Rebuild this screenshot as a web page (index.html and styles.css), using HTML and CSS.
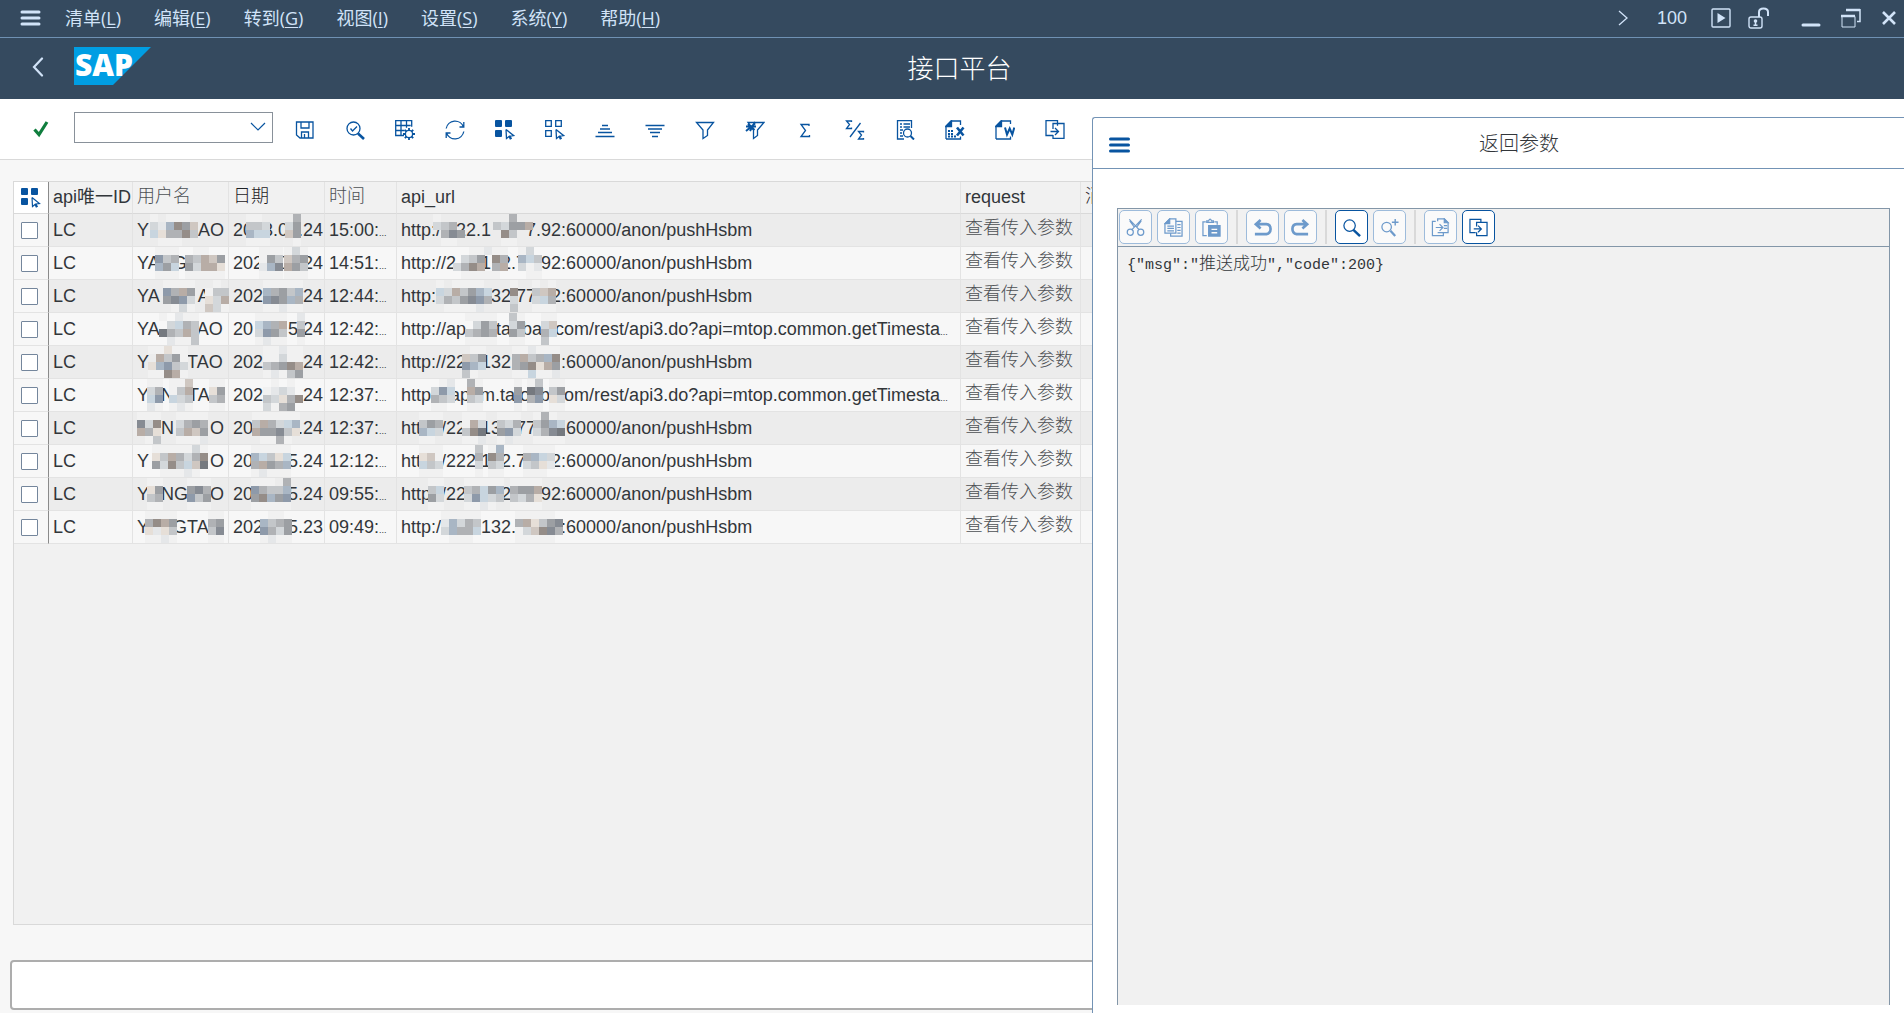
FILE: index.html
```html
<!DOCTYPE html>
<html lang="zh-CN">
<head>
<meta charset="utf-8">
<title>接口平台</title>
<link rel="stylesheet" href="styles.css">
</head>
<body>
<nav class="menubar">
  <button class="bar-button" aria-label="菜单"><svg width="21" height="18" viewBox="0 0 21 18"><path d="M2 3h17M2 9h17M2 15h17" stroke-width="3" stroke-linecap="round"/></svg></button>
  <div class="menus">
    <a href="#">清单(<u>L</u>)</a>
    <a href="#">编辑(<u>E</u>)</a>
    <a href="#">转到(<u>G</u>)</a>
    <a href="#">视图(<u>I</u>)</a>
    <a href="#">设置(<u>S</u>)</a>
    <a href="#">系统(<u>Y</u>)</a>
    <a href="#">帮助(<u>H</u>)</a>
  </div>
  <div class="system">
    <button class="bar-button" aria-label="更多"><svg width="10" height="16" viewBox="0 0 10 16"><path d="M1 1l8 7-8 7" stroke-width="1.3"/></svg></button>
    <span class="zoom">100</span>
    <button class="bar-button" aria-label="运行"><svg width="20" height="20" viewBox="0 0 20 20"><rect x="1" y="1" width="18" height="18" rx="1" stroke-width="1.4"/><path d="M6.500 5l8 5-8 5z" fill="#d1e3f8" stroke="none"/></svg></button>
    <button class="bar-button" aria-label="解锁"><svg width="22" height="22" viewBox="0 0 22 22"><rect x="1" y="10" width="13" height="11" rx="2" stroke-width="1.400"/><path d="M11 10V5q0-3.500 4.500-3.500T20 5v4" stroke-width="2"/><circle cx="7.500" cy="14" r="1.800" fill="#d1e3f8" stroke="none"/><path d="M7.500 14v4M5.500 18.200h4" stroke-width="1.500"/></svg></button>
    <span class="window-buttons">
      <button class="bar-button" aria-label="最小化"><svg width="20" height="20" viewBox="0 0 20 20"><path d="M2 17h16" stroke-width="3" stroke-linecap="round"/></svg></button>
      <button class="bar-button" aria-label="还原"><svg width="20" height="20" viewBox="0 0 20 20"><path d="M1 8.500h13V19H1z" stroke-width="1"/><path d="M0 8h14" stroke-width="2.500"/><path d="M5 2h14M19 1v12.500h-3" stroke-width="1.500"/><path d="M5 2h14" stroke-width="2.500"/></svg></button>
      <button class="bar-button" aria-label="关闭"><svg width="16" height="16" viewBox="0 0 16 16"><path d="M2 2l12 12M14 2L2 14" stroke-width="2.600"/></svg></button>
    </span>
  </div>
</nav>
<header class="header">
  <button class="back" aria-label="返回"><svg width="12" height="20" viewBox="0 0 12 20"><path d="M10 1.500L2 10l8 8.500" stroke="#d1e3f8" stroke-width="2.200" fill="none" stroke-linecap="round"/></svg></button>
  <svg class="logo" width="77" height="38" viewBox="0 0 77 38"><path d="M0 0h77L39 38H0z" fill="#009ee3"/><text x="1" y="29" class="logo-text">SAP</text></svg>
  <h1>接口平台</h1>
</header>
<main class="workspace">
  <section class="list-pane">
    <div class="toolbar">
      <button class="tick" aria-label="确认"><svg width="16" height="18" viewBox="0 0 16 18"><path d="M1.500 9.500l4.500 5L14 2" stroke="#107e3e" stroke-width="3.200" fill="none"/></svg></button>
      <select class="command" aria-label="命令"><option></option></select>
      <button class="tool" aria-label="保存"><svg viewBox="0 0 20 20"><path d="M1.500 2h16.500v16H5L1.500 15zM6 2v6h8V2M6.500 18v-6h7v6M9.500 14v4"/></svg></button>
      <button class="tool" aria-label="检查"><svg viewBox="0 0 20 20"><circle cx="8.500" cy="8.500" r="6.500"/><path d="M5.500 8.500l2 2.500 4.500-4.500"/><path d="M13 13.500l6 5.500" stroke-width="2.600"/></svg></button>
      <button class="tool" aria-label="布局"><svg viewBox="0 0 20 20"><path d="M9 15.500H.700V.700h16v6M.700 5.500h15M.700 10.500h9M6 .700v15M11.500.700v7"/><circle cx="14" cy="14" r="3.600"/><path d="M14 8v2.500M14 17.500V20M8 14h2.500M17.500 14H20M9.800 9.800l1.700 1.700M16.500 16.500l1.700 1.700M9.800 18.200l1.700-1.700M16.500 11.500l1.700-1.700" stroke-width="1.800"/></svg></button>
      <button class="tool" aria-label="刷新"><svg viewBox="0 0 20 20"><path d="M1.200 8.500A9 9 0 0 1 18.500 7M18.800 11.500A9 9 0 0 1 1.500 13M14.500 7h4.300V2M5.500 13H1.200v5"/></svg></button>
      <button class="tool" aria-label="全选"><svg viewBox="0 0 20 20"><g fill="#0854a0" stroke="none"><rect x="0" y="0" width="7" height="7" rx="1"/><rect x="10" y="0" width="7" height="7" rx="1"/><rect x="0" y="10" width="7" height="7" rx="1"/></g><path d="M11 9.500l7.500 6-3.500.500 1.500 3M11 9.500l.5 9 2.500-2 1.500 3"/></svg></button>
      <button class="tool" aria-label="取消全选"><svg viewBox="0 0 20 20"><path d="M.700.700h5.600v5.600H.700zM10.700.700h5.600v5.600h-5.600zM.700 10.700h5.600v5.600H.700zM11 9.500l7.500 6-3.500.500 1.500 3M11 9.500l.5 9 2.500-2 1.500 3"/></svg></button>
      <button class="tool" aria-label="升序"><svg viewBox="0 0 20 20"><path d="M7 5.500h6M5 9h10M3 12.500h14M.5 16.500h19"/></svg></button>
      <button class="tool" aria-label="降序"><svg viewBox="0 0 20 20"><path d="M.5 5.500h19M3 9h14M5 12.500h10M7 16.500h6"/></svg></button>
      <button class="tool" aria-label="筛选"><svg viewBox="0 0 20 20"><path d="M1.500 2.500h17L12.500 10v5.500L8 18.500V10z"/></svg></button>
      <button class="tool" aria-label="删除筛选"><svg viewBox="0 0 20 20"><path d="M3 2.500h16L12.500 10v5.500L8.500 18.500V10z"/><path d="M1 11l9-7.500M3 4l6.500 6M1 6.500h10M10 2l-5 9" stroke-width="2"/></svg></button>
      <button class="tool" aria-label="合计"><svg viewBox="0 0 20 20"><path d="M14 6V4.500H6l4.500 6L6 16.500h8.500V15"/></svg></button>
      <button class="tool" aria-label="小计"><svg viewBox="0 0 20 20"><path d="M6.500 2V1h-5l3 3.500-3 4h5V7.500M18.500 12.500V11.500h-5l3 3.500-3 4h5V18M15.500 3L5 17"/></svg></button>
      <button class="tool" aria-label="打印预览"><svg viewBox="0 0 20 20"><path d="M9 19H2.500V.700h14V8M5 4h2M8.500 4H15M5 7h2M8.500 7H15M5 10h3M5 13h2M5 16h3"/><circle cx="12.500" cy="13" r="4"/><path d="M15.500 16l3.500 3.500" stroke-width="2"/></svg></button>
      <button class="tool" aria-label="导出到电子表格"><svg viewBox="0 0 20 20"><path d="M1 19V6l5-5h9.500v4M15.500 16.500V19H1"/><path d="M1 6.500L6.500 1v5.500z" fill="#0854a0"/><path d="M3 11h6M3 14h6M3 16.500h9" stroke-dasharray="2 1" stroke-width="1.800"/><path d="M12 7.500l6.500 8M18.500 7.500L12 15.500" stroke-width="2.600"/></svg></button>
      <button class="tool" aria-label="导出到文字处理"><svg viewBox="0 0 20 20"><path d="M1 19V6l5-5h9.500v3M15.500 16.500V19H1"/><path d="M1 6.500L6.500 1v5.500z" fill="#0854a0"/><path d="M10 7.500l2 7 2.700-6 2.600 6 2-7" stroke-width="2"/></svg></button>
      <button class="tool" aria-label="本地文件"><svg viewBox="0 0 20 20"><path d="M8 15.500H1V.700h11.500v5M8 9V3.500h11v14.800H8V15M5.500 11.500h7.500M10 8l3.500 3.500L10 15"/></svg></button>
    </div>
    <div class="list-body">
      <div class="grid">
        <table>
          <colgroup><col class="c-check"><col class="c-id"><col class="c-name"><col class="c-name"><col class="c-time"><col class="c-url"><col class="c-request"><col class="c-rest"></colgroup>
          <thead>
            <tr>
              <th class="check"><button class="select-all" aria-label="选择全部"><svg width="20" height="20" viewBox="0 0 20 20"><g fill="#0854a0"><rect x="0" y="0" width="7" height="7" rx="1"/><rect x="10" y="0" width="7" height="7" rx="1"/><rect x="0" y="10" width="7" height="7" rx="1"/></g><path d="M11 9.500l7.500 6-3.500.500 1.500 3M11 9.500l.5 9 2.500-2 1.500 3" fill="none" stroke="#0854a0" stroke-width="1.200"/></svg></button></th>
              <th>api唯一ID</th><th class="thin">用户名</th><th class="thin dark">日期</th><th class="thin">时间</th><th>api_url</th><th>request</th><th class="thin dark">消息</th>
            </tr>
          </thead>
          <tbody id="rows"></tbody>
        </table>
      </div>
      <input class="status" type="text" readonly aria-label="状态">
    </div>
  </section>
  <section class="dialog">
    <header class="dialog-header">
      <button class="dialog-menu" aria-label="菜单"><svg width="21" height="18" viewBox="0 0 21 18"><path d="M1.500 3h18M1.500 9h18M1.500 15h18" stroke="#0854a0" stroke-width="3" stroke-linecap="round"/></svg></button>
      <h2>返回参数</h2>
    </header>
    <div class="dialog-body">
      <div class="editor">
        <div class="editor-tools">
          <button disabled aria-label="剪切"><svg viewBox="0 0 20 20"><circle cx="4.500" cy="15" r="3.200"/><circle cx="15.500" cy="15" r="3.200"/><path d="M6 12.500L16.500 1.500M14 12.500L3.500 1.500M4 3l5 7M16 3l-5 7"/></svg></button>
          <button disabled aria-label="复制"><svg viewBox="0 0 20 20"><path d="M6 1h6.500v15H1V6z"/><path d="M1 6h5V1z" fill="#6d9acb"/><path d="M12.500 3.500H19v15.500H7V16M3.500 8.500h7M3.500 11h7M3.500 13.500h7M14 7h3.500M14 10h3.500M14 13h3.500M14 16h3.500"/></svg></button>
          <button disabled aria-label="粘贴"><svg viewBox="0 0 20 20"><path d="M5 18.500H1V4h3M13 4h3v3M5 4.500h7V3h-2q-1.500-3.500-3 0H5z"/><path d="M7 8h12v11H7z" fill="#6d9acb"/><path d="M10 12h6M10 15.500h6" stroke="#fafafa" stroke-width="1.500"/></svg></button>
          <i></i>
          <button disabled aria-label="撤销"><svg class="bold" viewBox="0 0 20 20"><path d="M8 2L3 6.500 8 11M3 6.500h11q4.500.5 4.500 5t-4.500 5.500H2"/></svg></button>
          <button disabled aria-label="重做"><svg class="bold" viewBox="0 0 20 20"><path d="M12 2l5 4.500L12 11M17 6.500H6q-4.500.5-4.500 5T6 17h12"/></svg></button>
          <i></i>
          <button class="active" aria-label="查找"><svg viewBox="0 0 20 20"><circle cx="8" cy="8" r="6"/><path d="M12 12.500l7 6.500" stroke-width="2.600"/></svg></button>
          <button disabled aria-label="查找下一个"><svg viewBox="0 0 20 20"><circle cx="7" cy="9.500" r="5"/><path d="M11 13.500l5 5.500" stroke-width="2.400"/><path d="M16 1v7M12.500 4.500h7" stroke-width="1.500"/></svg></button>
          <i></i>
          <button disabled aria-label="导入"><svg viewBox="0 0 20 20"><path d="M7 3.500V1h7l4 4v10.500h-5M1.500 3.500H5M1.500 3v15.500H13V15.500M5 10h7M9 6.500l3.500 3.500L9 13.500M13.500 8H17M13.500 11H17M7 15.500h6"/><path d="M14 1v4h4z" fill="#6d9acb"/></svg></button>
          <button class="active" aria-label="导出"><svg viewBox="0 0 20 20"><path d="M7 15.500H1V1.500h11.500v3M8 9V4.500h11v14H8V15M5 11.500h7.500M9.500 8l3.500 3.500L9.500 15"/></svg></button>
        </div>
        <pre>{"msg":"<span>推送成功</span>","code":200}</pre>
      </div>
    </div>
  </section>
</main>
<script src="rows.js"></script>
</body>
</html>
```
FILE: styles.css
```css
* { box-sizing: border-box; }
html, body { height: 100%; }
body {
  margin: 0;
  display: flex;
  flex-direction: column;
  overflow: hidden;
  background: #fff;
  color: #32363a;
  font: 18px/32px "Liberation Sans", "Noto Sans CJK SC", sans-serif;
}
button {
  border: 0;
  padding: 0;
  background: none;
  display: flex;
  align-items: center;
  justify-content: center;
  flex: none;
}
h1, h2 { margin: 0; font-weight: 300; }
svg { display: block; flex: none; }

.menubar {
  display: flex;
  align-items: center;
  height: 38px;
  flex: none;
  padding: 0 7px 1px 20px;
  background: #354a5f;
  border-bottom: 1px solid #6f91b3;
}
.bar-button svg { fill: none; stroke: #d1e3f8; }
.menus { display: flex; gap: 33px; margin-left: 24px; }
.menus a {
  color: #d1e3f8;
  text-decoration: none;
  font-family: "Open Sans", "Noto Sans CJK SC", sans-serif;
}
.menus u { text-underline-offset: 2px; }
.system { display: flex; align-items: center; margin-left: auto; color: #d1e3f8; }
.zoom { margin: 0 24px 0 29px; }
.system > .bar-button + .bar-button { margin-left: 17px; }
.window-buttons { display: flex; align-items: center; gap: 20px; margin-left: 31px; }

.header {
  display: flex;
  align-items: center;
  height: 61px;
  flex: none;
  padding: 0 136px 4px 32px;
  background: #354a5f;
}
.logo { margin: 0 0 2px 30px; }
.logo-text { font: 800 30px "Open Sans", sans-serif; fill: #fff; }
.header h1 {
  flex: 1;
  text-align: center;
  color: #fff;
  font-size: 26px;
  font-family: "Noto Sans CJK SC", sans-serif;
}

.workspace { flex: 1; display: flex; min-height: 0; }
.list-pane { flex: 1; min-width: 0; display: flex; flex-direction: column; overflow: hidden; }
.toolbar {
  display: flex;
  align-items: center;
  height: 61px;
  flex: none;
  padding-left: 33px;
  border-bottom: 1px solid #d9d9d9;
}
.command {
  appearance: none;
  width: 199px;
  height: 31px;
  margin: 0 7px 4px 25px;
  border: 1px solid #89919a;
  border-radius: 0;
  background: #fff url("data:image/svg+xml,%3Csvg xmlns='http://www.w3.org/2000/svg' width='16' height='10'%3E%3Cpath d='M1 1l7 7 7-7' fill='none' stroke='%230854a0' stroke-width='1.2'/%3E%3C/svg%3E") no-repeat right 6px center;
}
.tool { width: 50px; height: 40px; padding-top: 1px; }
.tool svg { width: 20px; height: 20px; fill: none; stroke: #0854a0; stroke-width: 1.3; }

.list-body {
  flex: 1;
  min-height: 0;
  display: flex;
  flex-direction: column;
  padding: 21px 0 3px 10px;
  background: #f7f7f7;
}
.grid {
  flex: 1;
  min-height: 0;
  overflow: hidden;
  margin-left: 3px;
  background: #f1f1f1;
  border: 1px solid #d9d9d9;
  border-right: 0;
}
.status {
  height: 50px;
  flex: none;
  margin: 35px -8px 0 0;
  border: 2px solid #adadad;
  border-radius: 4px;
  background: #fff;
}

table { table-layout: fixed; width: 1227px; border-spacing: 0; }
.c-check { width: 35px; }
.c-id { width: 84px; }
.c-name { width: 96px; }
.c-time { width: 72px; }
.c-url { width: 564px; }
.c-request { width: 120px; }
.c-rest { width: 160px; }
th, td {
  padding: 0 0 0 4px;
  border-right: 1px solid #e3e3e3;
  border-bottom: 1px solid #e3e3e3;
  text-align: left;
  vertical-align: top;
  font-weight: 400;
  white-space: nowrap;
}
th { height: 32px; line-height: 31px; border-bottom-color: #d9d9d9; }
td { height: 33px; }
tbody tr:nth-child(odd) { background: #ececec; }
tbody tr:nth-child(even) { background: #f7f7f7; }
.check { padding: 0 0 0 7px; border-right-color: #8a8a8a; background: #f7f7f7; vertical-align: middle; }
th.check { background: #fff; }
.check input {
  appearance: none;
  display: block;
  width: 17px;
  height: 17px;
  margin: 0;
  border: 1px solid #74869c;
  border-radius: 1px;
  background: #fff;
}
.thin { font-weight: 300; color: #4c5054; line-height: 28px; }
.dark { color: #1d2125; }
.more { font-size: 9px; line-height: 1; }
.mosaic { display: inline-block; vertical-align: top; position: relative; }

.dialog {
  flex: 0 1 812px;
  margin-top: 18px;
  display: flex;
  flex-direction: column;
  border: 1px solid #7393b5;
  border-width: 1px 0 0 1px;
  border-radius: 3px 0 0 0;
}
.dialog-header {
  display: flex;
  align-items: center;
  height: 51px;
  flex: none;
  padding-left: 16px;
  border-bottom: 1px solid #7393b5;
}
.dialog-menu { margin-top: 4px; }
.dialog-header h2 { flex: 1; padding-left: 4px; text-align: center; font-size: 20px; font-family: "Noto Sans CJK SC", sans-serif; }
.dialog-body { flex: 1; min-height: 0; display: flex; padding: 39px 14px 8px 24px; }
.editor {
  flex: 1;
  background: #f1f1f1;
  border: 1px solid #8396a8;
  border-bottom: 0;
}
.editor-tools {
  display: flex;
  align-items: center;
  gap: 5px;
  height: 38px;
  padding: 0 1px 1px;
  border-bottom: 1px solid #8396a8;
}
.editor-tools button {
  width: 33px;
  height: 34px;
  border: 1px solid #9dbbdb;
  border-radius: 5px;
  background: #fafafa;
}
.editor-tools .active { border: 1px solid #0854a0; background: #fff; }
.editor-tools svg { width: 19px; height: 19px; fill: none; stroke: #6d9acb; stroke-width: 1.3; }
.editor-tools .active svg { stroke: #0854a0; }
.editor-tools .bold { stroke-width: 2.8; }
.editor-tools i { width: 2px; height: 34px; margin: 0 3px 0 3px; background: #d9d9d9; }
.editor pre { margin: 0; padding: 2px 9px; font: 300 15px/32px "Liberation Mono", "Noto Sans CJK SC", monospace; }
.editor pre span { font-size: 17px; }
```
FILE: rows.js
```javascript
// Palette of the blocks that cover private values; a dot leaves the cell visible.
const palette = {
  w: '#f1f1f1', a: '#e5e7e9', b: '#d3d7da', c: '#c3c6c9', d: '#b0b2b5', e: '#9c9fa3', f: '#868b93', g: '#75797f',
  h: '#e6dfd8', i: '#cfc7c1', j: '#b8ada6', k: '#958d88', l: '#c8d5df', m: '#a9b6c4', n: '#8e9aaa'
};

// "[width|row/row/row/row]" stands for a covered stretch of text.
const push = ':60000/anon/pushHsbm';
const rest = 'om/rest/api3.do?api=mtop.common.getTimesta…';
const rows = [
  ['Y[49|w.www./bamkei/lhddkc/.www..]AO', '20[10|ww./ccb/mll/www]3.0[10|.d/be/ie/.w].24', '15:00:…', 'http:/[15|w.../bcd./.dfe/.ww.]22.1[35|...d./.cbeej/..kc../..ww.]7.92' + push],
  ['YA[13|www/ncd/mel/www]G[36|.ww../dcjie/ebjjh/wwwww]', '202[15|www/wec/amf/www]0[15|wbw/ide/jec/www]24', '14:51:…', 'http://2[25|..ww/.bce/bdkj/.www]1[10|aww/.kd/.dj/ww.]2.7[15|wb../mlc/bwa/.ww]92' + push],
  ['YA[38|wwww/ndje/efnb/.wbw]A[13|.w./wcc/hbj/ibw]', '202[40|wwwww/mdecm/nfemd/wwaww]24', '12:44:…', 'http:[55|w.wwww./lbjceml/bdcefnd/.wwwwa.]32[5|w/k/b/c]77[15|w.w/cij/bld/www]2' + push],
  ['YA[37|w.aww/.bldc/gdcjc/.awwc]AO', '20[35|wwww/lmdj/bnec/waww]5[5|a/c/e/w]24', '12:42:…', 'http://ap[30|wwww/.bec/cded/wwww]ta[11|cw/be/ec/ww]ba[13|ww/bi/dl/c.]c' + rest],
  ['Y[38|wwhww/.jcew/hmncb/wwkjw]TAO', '202[40|wwaww/wwbww/cdekj/wawce]24', '12:42:…', 'http://22[15|.ww/ice/nml/cw.]132[50|wwawww/djcdmk/dekhje/wwlwwa]' + push],
  ['Y[12|ww/bd/ln/aw]N[14|wwi/wcj/lbc/waw]TA[14|ww/he/cd/ww]', '202[40|.w.w./waba./cbhdk/bwde.]24', '12:37:…', 'http:[14|.wa/bnl/dcb/ww.]ap[10|dw/je/cb/ww]m.ta[5|w/e/n/w]o[10|wc/gf/dn/ww]b[14|ww/ce/hb/ww]' + rest],
  ['[24|www/fbk/jdh/.wc]N[36|wwww/bded/cjie/wwwa]O', '20[45|wwwwww/cjdblm/jeefch/.wwdw.].24', '12:37:…', 'htt[20|www/ced/mlb/ww.]/22[15|www/wjb/ckg/wwa]13[15|www/cbd/enb/wa.]77[25|wdw/ceml/bdfg/wwww]' + push],
  ['Y[61|wwwwwbw/hcjdbdk/ebkclig/.wwwaw.]O', '20[20|www/mlc/dje/waw].[10|ww/hl/dm/ww]5.24', '12:12:…', 'htt[20|www/hiw/lcb/www]/222[5|c/d/b/w]1[10|wm/kd/cb/ww]2.7[25|wwww/dmlb/bcha/www.]2' + push],
  ['Y[12|ww/he/cd/ww]NG[22|www/efd/nce/www]O', '20[20|www/ndc/ekm/www].[10|.d/cm/en/ww]5.24', '09:55:…', 'http[10|ww/cl/eb/ww]/22[35|wwwww/cdlem/bnlbc/wwaw.]2[30|wwww/deej/cbdh/wwww]92' + push],
  ['Y[24|wwww/dkje/hahc/wwaw]GTA[13|ww/de/cf/ww]', '202[25|.ww./mcde/ndbe/waww]5.23', '09:49:…', 'http:/[40|wwwww/ambdc/bmddl/.www.]132.[45|wwwww/djhcef/wbikfd/wwwww.]' + push]
];

function mosaic(width, pattern) {
  const lines = pattern.split('/');
  const cols = Math.max(...lines.map(line => line.length));
  const margin = Math.round((width - cols * 8) / 2);
  const end = width - cols * 8 - margin;
  let rects = '';
  lines.forEach((line, y) => [...line].forEach((key, x) => {
    if (palette[key]) rects += `<rect x="${x * 8}" y="${y * 8}" width="8" height="8" fill="${palette[key]}"/>`;
  }));
  return `<svg class="mosaic" width="${cols * 8}" height="32" style="margin:0 ${end}px 0 ${margin}px">${rects}</svg>`;
}

function cell(text) {
  return text
    .replace(/\[(\d+)\|([^\]]*)\]/g, (all, width, pattern) => mosaic(Number(width), pattern))
    .replace('…', '<span class="more">...</span>');
}

document.getElementById('rows').innerHTML = rows.map((row, i) =>
  `<tr><td class="check"><input type="checkbox" aria-label="选择第 ${i + 1} 行"></td><td>LC</td>` +
  row.map(text => `<td>${cell(text)}</td>`).join('') +
  '<td class="thin">查看传入参数</td><td></td></tr>').join('');
```
